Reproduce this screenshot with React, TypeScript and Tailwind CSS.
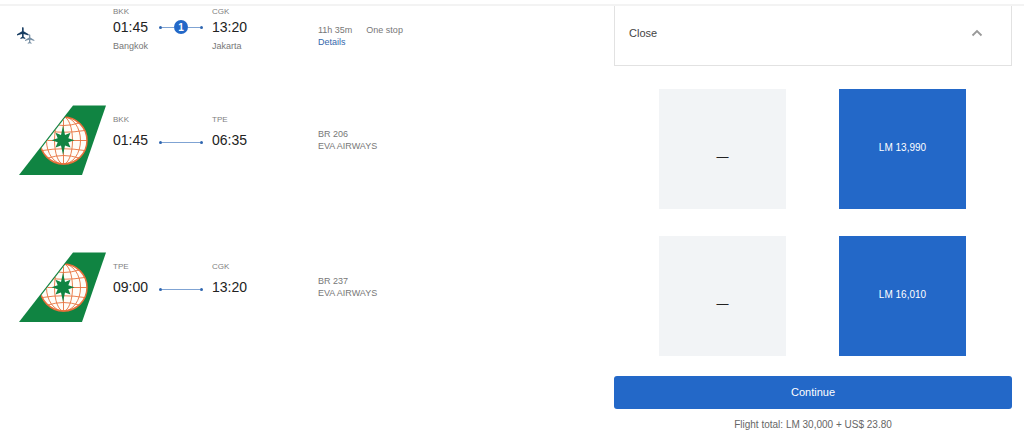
import React from "react";

type Leg = {
  from: string;
  depart: string;
  to: string;
  arrive: string;
  flight: string;
  airline: string;
  fare: string;
};

const legs: Leg[] = [
  { from: "BKK", depart: "01:45", to: "TPE", arrive: "06:35", flight: "BR 206", airline: "EVA AIRWAYS", fare: "LM 13,990" },
  { from: "TPE", depart: "09:00", to: "CGK", arrive: "13:20", flight: "BR 237", airline: "EVA AIRWAYS", fare: "LM 16,010" },
];

const planePath =
  "M6.5 0C7.1 0 7.4.8 7.4 1.8V4.6L13 8v1.4L7.4 7.8v3.1l1.8 1.4v.9L6.5 12.5 3.8 13.2v-.9l1.8-1.4V7.8L0 9.4V8l5.6-3.4V1.8C5.6.8 5.9 0 6.5 0Z";

function PlanesIcon() {
  return (
    <svg width="18" height="18" viewBox="0 0 18 18" aria-hidden="true">
      <path d={planePath} fill="#183d62" transform="scale(.9)" />
      <path d={planePath} fill="#fff" stroke="#fff" strokeWidth="1" transform="translate(8 7.2) scale(.72)" />
      <path d={planePath} fill="#7890a5" transform="translate(8 7.2) scale(.72)" />
    </svg>
  );
}

function TailLogo({ id }: { id: string }) {
  return (
    <svg width="87" height="70" viewBox="0 0 87 70" role="img" aria-label="EVA Air">
      <defs>
        <clipPath id={id}>
          <path d="M55.5.5H87L63 70H1.5Z" />
        </clipPath>
      </defs>
      <path d="M54 .5H87L63 70H0Z" fill="#108442" />
      <g clipPath={`url(#${id})`} fill="none" stroke="#e8703c" strokeWidth=".9">
        <circle cx="44.5" cy="35.5" r="23.5" fill="#fffdf8" strokeWidth="1.5" />
        <ellipse cx="44.5" cy="35.5" rx="17" ry="23.5" />
        <ellipse cx="44.5" cy="35.5" rx="9" ry="23.5" />
        <path d="M44.5 12V59M21 35.5H68M23.500 25.500Q44.500 29 65.500 25.500M29 18Q44.500 23 60 18M23.500 45.500Q44.500 42 65.500 45.500M29 53Q44.500 48 60 53" />
      </g>
      <path
        d="M44 20.500L46 30 51.500 27.800 49.300 33.200 55.500 35.200 49.300 37.200 51.500 42.600 46 40.400 44 50 42 40.400 36.500 42.600 38.700 37.200 32.500 35.200 38.700 33.200 36.500 27.800 42 30Z"
        fill="#108442"
      />
    </svg>
  );
}

function Connector({ stops }: { stops?: number }) {
  return (
    <div className="flex h-4 w-[44px] items-center">
      <span className="size-[3px] rounded-full bg-[#2f66b0]" />
      <span className="h-px flex-1 bg-[#7fa3d3]" />
      {stops !== undefined && (
        <>
          <span className="flex size-[14px] items-center justify-center rounded-full bg-[#2368c8] text-[10px] font-bold text-white">
            {stops}
          </span>
          <span className="h-px flex-1 bg-[#7fa3d3]" />
        </>
      )}
      <span className="size-[3px] rounded-full bg-[#2f66b0]" />
    </div>
  );
}

function Stop({ code, time, city }: { code: string; time: string; city?: string }) {
  return (
    <div>
      <div className="text-[8px] leading-3 text-[#808080]">{code}</div>
      <div className={`${city ? "pt-px" : "pt-[6px]"} text-sm leading-4 text-[#222]`}>{time}</div>
      {city && <div className="pt-[5px] text-[9px] leading-3 text-[#777]">{city}</div>}
    </div>
  );
}

const rowGrid = "grid grid-cols-[614fr_398fr] pr-3";
const tripGrid = "grid grid-cols-[94px_99px_106px_1fr] pl-[19px]";

export default function App() {
  return (
    <main className="bg-white pt-1 font-['Liberation_Sans',Arial,sans-serif] text-[#222]">
      <div className="border-t-2 border-[#f3f3f3]">
        <section className={rowGrid}>
          <div className={tripGrid}>
            <div className="-ml-[2px] pt-[21px]">
              <PlanesIcon />
            </div>
            <div className="flex gap-2">
              <div className="w-[38px]">
                <Stop code="BKK" time="01:45" city="Bangkok" />
              </div>
              <div className="pt-[13px]">
                <Connector stops={1} />
              </div>
            </div>
            <Stop code="CGK" time="13:20" city="Jakarta" />
            <div className="pt-[18px] text-[9px] leading-3 text-[#777]">
              <div className="flex gap-[14px]">
                <span>11h 35m</span>
                <span>One stop</span>
              </div>
              <a href="#details" className="block text-[#3468ad]">
                Details
              </a>
            </div>
          </div>
          <button
            type="button"
            className="flex h-[60px] items-center justify-between border border-t-0 border-[#e2e2e2] pr-7 pb-[5px] pl-[14px] text-[11px] text-[#444]"
          >
            Close
            <svg width="12" height="8" viewBox="0 0 12 8" fill="none" aria-hidden="true">
              <path d="M1.500 6.500 6 2l4.500 4.500" stroke="#999" strokeWidth="1.800" />
            </svg>
          </button>
        </section>

        <div className="flex flex-col gap-[27px] pt-[23px]">
          {legs.map((leg) => (
            <section key={leg.flight} className={rowGrid}>
              <div className={tripGrid}>
                <div className="pt-4">
                  <TailLogo id={`tail-${leg.from}`} />
                </div>
                <div className="flex gap-2 pt-[25px]">
                  <div className="w-[38px]">
                    <Stop code={leg.from} time={leg.depart} />
                  </div>
                  <div className="pt-5">
                    <Connector />
                  </div>
                </div>
                <div className="pt-[25px]">
                  <Stop code={leg.to} time={leg.arrive} />
                </div>
                <div className="pt-[39px] text-[9px] leading-3 text-[#777]">
                  <div>{leg.flight}</div>
                  <div>{leg.airline}</div>
                </div>
              </div>
              <div className="grid h-[120px] grid-cols-2 gap-[53px] pr-[46px] pl-[45px]">
                <div className="flex items-center justify-center bg-[#f2f4f6] pt-4 text-xs">—</div>
                <button type="button" className="bg-[#2368c8] pb-1 text-[10px] text-white">
                  {leg.fare}
                </button>
              </div>
            </section>
          ))}
        </div>

        <section className={`${rowGrid} pt-5`}>
          <div className="col-start-2 text-center">
            <button type="button" className="block h-[33px] w-full rounded-[3px] bg-[#2368c8] text-[11px] text-white">
              Continue
            </button>
            <p className="pt-2 text-[10px] leading-4 text-[#666]">Flight total: LM 30,000 + US$ 23.80</p>
          </div>
        </section>
      </div>
    </main>
  );
}
